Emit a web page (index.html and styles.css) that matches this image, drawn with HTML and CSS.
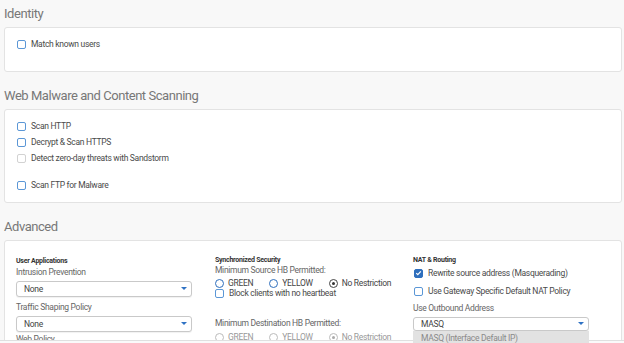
FILE: index.html
```html
<!DOCTYPE html>
<html lang="en">
<head>
  <meta charset="UTF-8" />
  <title>Web Filtering Options</title>
  <link rel="stylesheet" href="styles.css">
</head>
<body>

<div class="page">
  <h2 class="section-title">Identity</h2>
  <div class="panel panel-identity">
    <div class="check"><span class="box"></span>Match known users</div>
  </div>

  <h2 class="section-title">Web Malware and Content Scanning</h2>
  <div class="panel panel-scan">
    <div class="check"><span class="box"></span>Scan HTTP</div>
    <div class="check"><span class="box"></span>Decrypt &amp; Scan HTTPS</div>
    <div class="check disabled"><span class="box"></span>Detect zero-day threats with Sandstorm</div>
    <div class="spacer"></div>
    <div class="check"><span class="box"></span>Scan FTP for Malware</div>
  </div>

  <h2 class="section-title">Advanced</h2>
  <div class="panel panel-advanced">
    <div class="col col-apps">
      <div class="group-title">User Applications</div>
      <div class="field-label">Intrusion Prevention</div>
      <div class="select">None</div>
      <div class="field-label gap">Traffic Shaping Policy</div>
      <div class="select">None</div>
      <div class="field-label tight">Web Policy</div>
    </div>

    <div class="col col-sync">
      <div class="group-title">Synchronized Security</div>
      <div class="field-label">Minimum Source HB Permitted:</div>
      <div class="radios">
        <span class="radio"><span class="dot"></span>GREEN</span>
        <span class="radio"><span class="dot"></span>YELLOW</span>
        <span class="radio selected"><span class="dot"></span>No Restriction</span>
      </div>
      <div class="check small"><span class="box"></span>Block clients with no heartbeat</div>
      <div class="field-label dest">Minimum Destination HB Permitted:</div>
      <div class="radios disabled">
        <span class="radio"><span class="dot"></span>GREEN</span>
        <span class="radio"><span class="dot"></span>YELLOW</span>
        <span class="radio selected"><span class="dot"></span>No Restriction</span>
      </div>
    </div>

    <div class="col col-nat">
      <div class="group-title">NAT &amp; Routing</div>
      <div class="check nat-first checked">
        <span class="box">
          <svg viewBox="0 0 10 10" width="8" height="8"><path d="M1.8 5.2 L4 7.3 L8.3 2.6" fill="none" stroke="#fff" stroke-width="1.8"/></svg>
        </span>Rewrite source address (Masquerading)
      </div>
      <div class="check nat-second"><span class="box"></span>Use Gateway Specific Default NAT Policy</div>
      <div class="field-label outbound">Use Outbound Address</div>
      <div class="select select-open">MASQ
        <div class="dropdown-item">MASQ (Interface Default IP)</div>
      </div>
    </div>
  </div>
</div>

<div class="bottom-edge"></div>

</body>
</html>
```

FILE: styles.css
```css
html, body {
  margin: 0;
  padding: 0;
  overflow: hidden;
}
body {
  background: #f8f8f8;
  font-family: Roboto, 'Liberation Sans', sans-serif;
}
.page {
  padding: 0 2px 0 4px;
}
.section-title {
  margin: 10px 0 0;
  height: 27px;
  line-height: 27px;
  font-size: 13px;
  font-weight: 400;
  letter-spacing: -0.45px;
  color: #777;
}
.section-title:first-child {
  margin-top: 0;
}
.panel {
  background: #fff;
  border: 1px solid #e3e3e3;
  border-radius: 3px;
}
.panel-identity {
  padding: 8px 12px 19px;
}
.panel-scan {
  padding: 8px 12px 9px;
}
.spacer {
  height: 11px;
}
.check {
  display: flex;
  align-items: center;
  height: 16px;
  font-size: 8.5px;
  letter-spacing: -0.3px;
  color: #4a4a4a;
  white-space: nowrap;
}
.box {
  box-sizing: border-box;
  width: 9px;
  height: 9px;
  margin-right: 5px;
  border: 1.5px solid #5b97d6;
  border-radius: 2px;
  background: #fff;
  display: flex;
  align-items: center;
  justify-content: center;
  flex-shrink: 0;
}
.check.disabled .box {
  border-color: #d2d2d2;
}
.check.checked .box {
  background: #2f6fbd;
  border-color: #2f6fbd;
}

/* advanced */
.panel-advanced {
  display: grid;
  grid-template-columns: 199px 198px 1fr;
  padding: 15px 11px 0;
  height: 140px;
}
.group-title {
  font-size: 7px;
  font-weight: bold;
  letter-spacing: -0.25px;
  color: #333;
  height: 9px;
  line-height: 9px;
}
.col-apps .group-title {
  height: 10px;
  line-height: 10px;
}
.field-label {
  font-size: 8.5px;
  letter-spacing: -0.3px;
  color: #666;
  height: 12px;
  line-height: 12px;
  white-space: nowrap;
}
.field-label.gap {
  margin-top: 4px;
}
.field-label.tight {
  margin-top: 1px;
}
.select {
  position: relative;
  box-sizing: border-box;
  margin-top: 3px;
  width: 176px;
  height: 16px;
  padding-left: 7px;
  border: 1px solid #c9c9c9;
  border-radius: 3px;
  background: #fff;
  box-shadow: 0 1px 1px rgba(0, 0, 0, 0.06);
  font-size: 8.5px;
  letter-spacing: -0.3px;
  line-height: 14px;
  color: #444;
}
.select::after {
  content: '';
  position: absolute;
  right: 4px;
  top: 5px;
  border-left: 3px solid transparent;
  border-right: 3px solid transparent;
  border-top: 3px solid #2f72c4;
}

.col-sync .field-label {
  height: 10px;
  line-height: 10px;
}
.radios {
  display: flex;
  margin-top: 3px;
  height: 10px;
  align-items: center;
}
.radio {
  display: flex;
  align-items: center;
  margin-right: 16px;
  font-size: 8.5px;
  letter-spacing: -0.3px;
  color: #444;
  white-space: nowrap;
}
.dot {
  box-sizing: border-box;
  width: 9px;
  height: 9px;
  margin-right: 4px;
  border: 1.5px solid #2f6fbd;
  border-radius: 50%;
  display: flex;
  align-items: center;
  justify-content: center;
}
.radio.selected .dot {
  border-color: #444;
}
.radio.selected .dot::after {
  content: '';
  width: 3px;
  height: 3px;
  border-radius: 50%;
  background: #333;
}
.radios.disabled .radio {
  color: #999;
}
.radios.disabled .dot {
  border: 1px solid #bbb;
}
.radios.disabled .radio.selected .dot::after {
  background: #aaa;
}
.check.small {
  height: 10px;
}
.field-label.dest {
  margin-top: 20px;
}
.radios.disabled {
  margin-top: 4px;
}

.col-nat .check {
  height: 12px;
  padding-left: 1px;
}
.nat-first {
  margin-top: 2px;
}
.nat-second {
  margin-top: 6px;
}
.field-label.outbound {
  margin-top: 5px;
}
.select-open {
  height: 14px;
  line-height: 12px;
}
.select-open::after {
  top: 4px;
}
.dropdown-item {
  position: absolute;
  z-index: 2;
  left: -1px;
  top: 13px;
  width: 176px;
  height: 14px;
  padding-left: 8px;
  box-sizing: border-box;
  background: #e2e2e2;
  color: #8a8a8a;
  line-height: 14px;
}
.bottom-edge {
  position: fixed;
  z-index: 1;
  left: 0;
  right: 0;
  bottom: 0;
  height: 2px;
  border-top: 1px solid #e0e0e0;
  background: #fafafa;
}
```
